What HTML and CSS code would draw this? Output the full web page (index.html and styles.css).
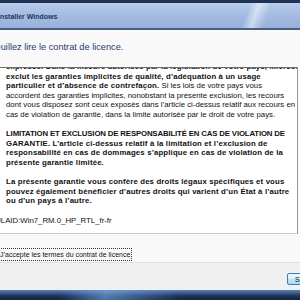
FILE: index.html
```html
<!DOCTYPE html>
<html lang="fr">
<head>
<meta charset="UTF-8">
<title>Installer Windows</title>
<link rel="stylesheet" href="styles.css">
</head>
<body>

<div class="window">
    <div class="frame-top"></div>
    <div class="titlebar">
        <span class="title">Installer Windows</span>
    </div>
    <div class="title-rule"></div>

    <div class="content">
        <h1 class="heading">Veuillez lire le contrat de licence.</h1>

        <div class="license">
            <div class="license-text">
                <p><b>expresse. Dans la mesure autorisée par la législation de votre pays, Microsoft</b><br>
                <b>exclut les garanties implicites de qualité, d’adéquation à un usage</b><br>
                <b>particulier et d’absence de contrefaçon.</b> Si les lois de votre pays vous<br>
                accordent des garanties implicites, nonobstant la présente exclusion, les recours<br>
                dont vous disposez sont ceux exposés dans l’article ci-dessus relatif aux recours en<br>
                cas de violation de garantie, dans la limite autorisée par le droit de votre pays.</p>

                <p><b><span class="caps">LIMITATION ET EXCLUSION DE RESPONSABILITÉ EN CAS DE VIOLATION DE</span><br>
                GARANTIE. L’article ci-dessus relatif à la limitation et l’exclusion de<br>
                responsabilité en cas de dommages s’applique en cas de violation de la<br>
                présente garantie limitée.</b></p>

                <p><b>La présente garantie vous confère des droits légaux spécifiques et vous<br>
                pouvez également bénéficier d’autres droits qui varient d’un État à l’autre<br>
                ou d’un pays à l’autre.</b></p>

                <p class="eula-id">EULAID:Win7_RM.0_HP_RTL_fr-fr</p>
            </div>
        </div>

        <div class="accept">
            <label class="accept-label">J’accepte les termes du contrat de licence</label>
        </div>

        <div class="footer">
            <button class="next" type="button">Suivant</button>
        </div>
    </div>

    <div class="frame-bottom"></div>
</div>

</body>
</html>
```

FILE: styles.css
```css
body {
    margin: 0;
    width: 300px;
    height: 300px;
    overflow: hidden;
    font-family: "Liberation Sans", Arial, sans-serif;
}
.window {
    display: flex;
    flex-direction: column;
    height: 300px;
    overflow: hidden;
}
.frame-top {
    height: 3px;
    background: #1f3154;
}
.titlebar {
    height: 25px;
    background:
        linear-gradient(110deg, transparent 81%, rgba(255,255,255,0.5) 84%, transparent 88%),
        linear-gradient(180deg, #b7cbea 0%, #a3bbe2 50%, #9ab2db 100%);
    overflow: hidden;
}
.title {
    display: block;
    margin: 9px 0 0 -2px;
    font-size: 7px;
    line-height: 10px;
    font-weight: bold;
    color: #203560;
    white-space: nowrap;
}
.title-rule {
    height: 2px;
    background: #4a5e82;
}
.content {
    flex: 1;
    display: flex;
    flex-direction: column;
    background: #f9f9f9;
    overflow: hidden;
}
.heading {
    margin: 12px 0 0 -10px;
    font-size: 9.2px;
    line-height: 11px;
    font-weight: normal;
    color: #1f3a6a;
    white-space: nowrap;
}
.license {
    margin-top: 14px;
    margin-right: 2px;
    height: 165px;
    background: #ffffff;
    border-top: 1px solid #6e6e6e;
    border-right: 1px solid #9a9a9a;
    border-bottom: 1px solid #c8c8c8;
    overflow: hidden;
}
.license-text {
    margin-top: -6px;
    padding-left: 6px;
    font-size: 7.8px;
    line-height: 9.6px;
    color: #111111;
    white-space: nowrap;
}
.license-text p {
    margin: 0 0 9.6px 0;
}
.license-text b {
    letter-spacing: 0.15px;
}
.license-text .caps {
    letter-spacing: -0.15px;
}
.license-text .eula-id {
    margin-left: -16px;
}
.accept {
    padding: 9px 0 0 0;
    height: 19px;
}
.accept-label {
    display: inline-block;
    margin-left: -4px;
    padding: 1px 1px 1px 4px;
    font-size: 7px;
    line-height: 9px;
    color: #111111;
    outline: 1px dotted #333333;
    white-space: nowrap;
}
.footer {
    flex: 1;
    display: flex;
    justify-content: flex-end;
    align-items: flex-start;
    padding-top: 10px;
    background: #f0f0f0;
    border-top: 1px solid #dfdfdf;
    overflow: hidden;
}
.next {
    margin-right: -50px;
    width: 63px;
    height: 12px;
    padding: 0 0 0 7px;
    text-align: left;
    font-family: "Liberation Sans", Arial, sans-serif;
    font-size: 7px;
    color: #111111;
    background: linear-gradient(180deg, #eaf6fd 0%, #d9f0fc 50%, #bee6fd 51%, #a7d9f5 100%);
    border: 1px solid #3c7fb1;
    border-radius: 2px;
}
.frame-bottom {
    height: 10px;
    background:
        linear-gradient(90deg, transparent 20%, rgba(120,170,230,0.6) 35%, transparent 60%),
        linear-gradient(180deg, #5c7fb0 0%, #3b5a8c 30%, #1d3258 60%, #14233f 100%);
}
```
